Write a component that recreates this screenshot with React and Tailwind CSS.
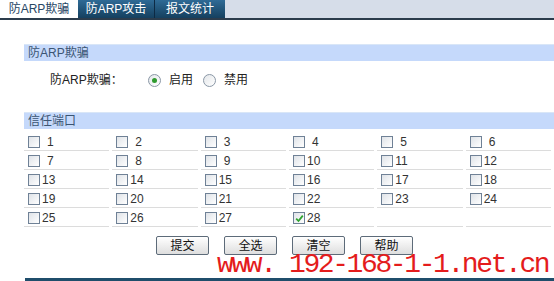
/**
 * ArpPage — anti-ARP spoofing settings with trusted port list.
 */
import { useState } from "react";

const cells = Array.from({ length: 30 }, (_, i) => i + 1);

function Checkbox({ checked }) {
    return (
        <span className="inline-flex h-[12px] w-[12px] shrink-0 items-center justify-center border border-[#6f8196] bg-gradient-to-br from-[#dfe3e8] to-white">
            {checked && (
                <svg width="9" height="9" viewBox="0 0 9 9">
                    <path d="M1.2 4.6 L3.5 7 L7.8 1.6" fill="none" stroke="#2fa32f" strokeWidth="1.8" />
                </svg>
            )}
        </span>
    );
}

function Radio({ checked }) {
    return (
        <span className="inline-flex h-[13px] w-[13px] items-center justify-center rounded-full border border-[#8a97a6] bg-gradient-to-br from-[#e4e7ea] to-white">
            {checked && <span className="h-[5px] w-[5px] rounded-full bg-[#2f9a2f]" />}
        </span>
    );
}

function SectionHeader({ children }) {
    return (
        <div className="ml-[24px] h-[17px] border-t border-[#d9e6f7] bg-[#c5d9fb] pl-[4px] text-[12px] leading-[16px] text-[#3b5573]">
            {children}
        </div>
    );
}

export default function App() {
    const [enabled, setEnabled] = useState(true);
    const [checked, setChecked] = useState([28]);

    return (
        <div
            className="relative h-[281px] w-[554px] overflow-hidden bg-white text-[12px] text-[#222]"
            style={{ fontFamily: '"Liberation Sans", "Noto Sans CJK SC", sans-serif' }}
        >
            {/* Tabs */}
            <div className="flex h-[20px] border-b-2 border-[#2c3c4c] bg-[#d6dde9]">
                <div className="flex w-[78px] items-center justify-center bg-white pb-[1px] text-[#274664]">
                    防ARP欺骗
                </div>
                <div className="flex w-[77px] items-center justify-center border-r border-[#0d2a44] bg-gradient-to-b from-[#2f6b96] to-[#15405f] text-white">
                    防ARP攻击
                </div>
                <div className="flex w-[70px] items-center justify-center bg-gradient-to-b from-[#2f6b96] to-[#15405f] text-white">
                    报文统计
                </div>
            </div>

            <div className="h-[24px]" />
            <SectionHeader>防ARP欺骗</SectionHeader>

            <div className="flex h-[37px] items-center pt-[1px]">
                <span className="ml-[50px] w-[98px]">防ARP欺骗：</span>
                <button className="flex items-center gap-[8px]" onClick={() => setEnabled(true)}>
                    <Radio checked={enabled} />
                    <span>启用</span>
                </button>
                <button className="ml-[10px] flex items-center gap-[8px]" onClick={() => setEnabled(false)}>
                    <Radio checked={!enabled} />
                    <span>禁用</span>
                </button>
            </div>

            <div className="h-[14px]" />
            <SectionHeader>信任端口</SectionHeader>

            {/* Port grid */}
            <div className="ml-[24px] mt-[3px] grid grid-cols-6">
                {cells.map((p) => (
                    <label
                        key={p}
                        className="mr-[3px] flex h-[19px] items-center border-b border-[#dcdcdc] pl-[4px] pt-[2px] text-[#333]"
                        onClick={() =>
                            p <= 28 &&
                            setChecked((c) => (c.includes(p) ? c.filter((x) => x !== p) : [...c, p]))
                        }
                    >
                        {p <= 28 && (
                            <>
                                <Checkbox checked={checked.includes(p)} />
                                <span className={p < 10 ? "ml-[7px]" : "ml-[2px]"}>{p}</span>
                            </>
                        )}
                    </label>
                ))}
            </div>

            {/* Buttons */}
            <div className="ml-[156px] mt-[9px] flex gap-[15px]">
                {["提交", "全选", "清空", "帮助"].map((b) => (
                    <button
                        key={b}
                        className="h-[19px] w-[53px] rounded-[2px] border border-[#5d6b79] bg-gradient-to-b from-white to-[#dedede] text-[12px] leading-[16px] text-[#111]"
                    >
                        {b}
                    </button>
                ))}
            </div>

            {/* Watermark */}
            <div
                className="absolute left-[217px] top-[257px] whitespace-pre text-[28px] leading-[16px] tracking-[-2.4px] text-[#e41c1c]"
                style={{ fontFamily: '"Liberation Mono", monospace' }}
            >
                www. 192-168-1-1.net.cn
            </div>

            <div className="absolute bottom-0 left-[25px] right-0 h-[3px] bg-[#1f4d6b]" />
        </div>
    );
}
